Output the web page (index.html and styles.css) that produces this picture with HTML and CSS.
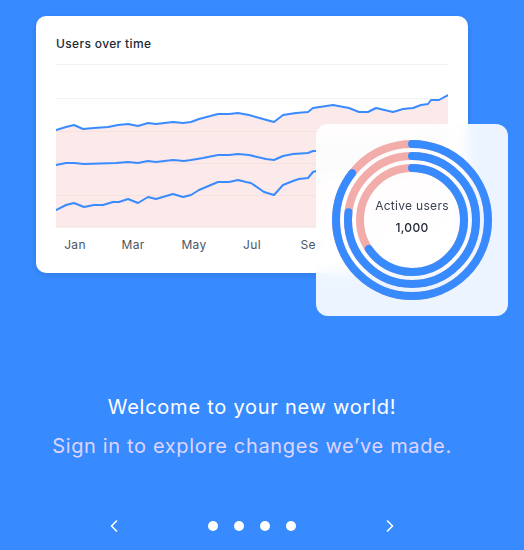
FILE: index.html
```html
<!DOCTYPE html>
<html lang="en">
<head>
<meta charset="utf-8">
<title>Welcome</title>
<link rel="stylesheet" href="styles.css">
</head>
<body>
<div class="page">
  <section class="hero">
    <div class="chart-card">
      <h2 class="card-title">Users over time</h2>
      <svg class="chart" width="392" height="200" viewBox="0 0 392 200">
        <path class="area" d="M0,70 L10,67 L18,65 L27,69 L38,68 L52,67 L62,65 L72,64 L82,66 L92,63 L100,64 L117,62 L127,63 L135,62 L143,59 L162,54 L173,54 L182,53 L193,55 L207,59 L218,62 L227,55 L240,53 L252,52 L257,48 L277,45 L293,48 L303,52 L312,52 L320,48 L337,52 L347,49 L357,48 L365,45 L372,44 L375,40 L383,40 L392,35 L392,167 L0,167 Z"/>
        <line class="grid" x1="0" y1="4.5" x2="392" y2="4.5"/>
        <line class="grid" x1="0" y1="38.5" x2="392" y2="38.5"/>
        <line class="grid pinkgrid" x1="0" y1="71.5" x2="392" y2="71.5"/>
        <line class="grid pinkgrid" x1="0" y1="103.5" x2="392" y2="103.5"/>
        <line class="grid pinkgrid" x1="0" y1="135.5" x2="392" y2="135.5"/>
        <line class="grid pinkgrid" x1="0" y1="167" x2="392" y2="167"/>
        <polyline class="line" points="0,70 10,67 18,65 27,69 38,68 52,67 62,65 72,64 82,66 92,63 100,64 117,62 127,63 135,62 143,59 162,54 173,54 182,53 193,55 207,59 218,62 227,55 240,53 252,52 257,48 277,45 293,48 303,52 312,52 320,48 337,52 347,49 357,48 365,45 372,44 375,40 383,40 392,35"/>
        <polyline class="line" points="0,105 10,103 18,103 28,104 60,103 72,102 82,103 92,101 100,102 117,100 128,101 135,100 147,98 162,95 173,95 182,94 193,95 210,99 218,100 227,96 237,94 252,93 257,91 260,91 277,85 293,88 303,92 312,92 320,88 337,92 347,89 357,88 365,85 372,84 375,80 383,80 392,75"/>
        <polyline class="line" points="0,150 10,145 18,143 28,147 38,145 47,145 57,142 63,142 72,139 82,143 92,137 100,139 117,134 127,137 135,135 143,130 162,122 173,122 182,120 190,122 195,123 208,132 218,135 227,125 237,121 243,119 252,118 257,112 260,111 277,104 293,107 303,110 320,105 340,108 360,102 375,96 392,90"/>
        <text class="tick" x="19" y="189">Jan</text>
        <text class="tick" x="77" y="189">Mar</text>
        <text class="tick" x="138" y="189">May</text>
        <text class="tick" x="196" y="189">Jul</text>
        <text class="tick" x="256" y="189">Sep</text>
        <text class="tick" x="316" y="189">Nov</text>
      </svg>
    </div>
    <div class="stat-card">
      <svg class="rings" width="192" height="192" viewBox="0 0 192 192">
        <g transform="rotate(-90 96 96)">
          <circle class="track" cx="96" cy="96" r="76"/>
          <circle class="track" cx="96" cy="96" r="64"/>
          <circle class="track" cx="96" cy="96" r="52"/>
          <circle class="bar" cx="96" cy="96" r="76" stroke-dasharray="408 478"/>
          <circle class="bar" cx="96" cy="96" r="64" stroke-dasharray="309 403"/>
          <circle class="bar" cx="96" cy="96" r="52" stroke-dasharray="214 327"/>
        </g>
      </svg>
      <div class="stat-text">
        <div class="stat-label">Active users</div>
        <div class="stat-value">1,000</div>
      </div>
    </div>
  </section>

  <section class="intro">
    <h1 class="intro-title">Welcome to your new world!</h1>
    <p class="intro-sub">Sign in to explore changes we’ve made.</p>
  </section>

  <nav class="pager">
    <svg class="chev" width="8" height="12" viewBox="0 0 8 12"><polyline points="6.5,1 1.5,6 6.5,11"/></svg>
    <div class="dots">
      <span class="dot"></span><span class="dot"></span><span class="dot"></span><span class="dot"></span>
    </div>
    <svg class="chev" width="8" height="12" viewBox="0 0 8 12"><polyline points="1.5,1 6.5,6 1.5,11"/></svg>
  </nav>
</div>
</body>
</html>
```

FILE: styles.css
```css
* { box-sizing: border-box; }
html, body { margin: 0; padding: 0; }
body {
  background: #388bff;
  font-family: Inter, "Open Sans", sans-serif;
}
.page {
  width: 524px;
  height: 550px;
  display: flex;
  flex-direction: column;
}
.hero {
  position: relative;
  height: 316px;
  padding: 16px 0 0 36px;
}
.chart-card {
  width: 432px;
  height: 257px;
  background: #fff;
  border-radius: 10px;
  padding: 20px 20px 13px;
  box-shadow: 0 2px 6px rgba(20, 50, 120, 0.18);
}
.card-title {
  margin: 0 0 8px;
  font-size: 12px;
  line-height: 16px;
  font-weight: 500;
  letter-spacing: 0.35px;
  color: #232a36;
}
.chart { display: block; overflow: hidden; }
.area { fill: #fbeae9; }
.grid { stroke: #f1f2f6; stroke-width: 1; }
.pinkgrid { stroke: #f5e1e0; }
.line {
  fill: none;
  stroke: #3a8bff;
  stroke-width: 2;
  stroke-linejoin: round;
  stroke-linecap: round;
}
.tick {
  font-size: 12px;
  fill: #4b5563;
  text-anchor: middle;
  letter-spacing: 0.3px;
}
.stat-card {
  position: absolute;
  left: 316px;
  top: 124px;
  width: 192px;
  height: 192px;
  border-radius: 12px;
  background: rgba(255, 255, 255, 0.9);
  -webkit-backdrop-filter: blur(8px);
  backdrop-filter: blur(8px);
}
.rings { position: absolute; left: 0; top: 0; }
.track { fill: none; stroke: #f2adab; stroke-width: 8; }
.bar { fill: none; stroke: #388bff; stroke-width: 8; stroke-linecap: round; }
.stat-text {
  position: absolute;
  inset: 0;
  display: flex;
  flex-direction: column;
  align-items: center;
  justify-content: center;
  gap: 7px;
  padding-bottom: 8px;
}
.stat-label {
  font-size: 12px;
  line-height: 15px;
  letter-spacing: 0.3px;
  color: #3a4150;
}
.stat-value {
  font-size: 12px;
  line-height: 15px;
  font-weight: 500;
  letter-spacing: 0.3px;
  color: #222936;
}
.intro {
  width: 504px;
  margin-top: 77px;
  text-align: center;
}
.intro-title {
  margin: 0;
  font-size: 20px;
  line-height: 28px;
  font-weight: 400;
  letter-spacing: 0.75px;
  color: #ffffff;
}
.intro-sub {
  margin: 11px 0 0;
  font-size: 20px;
  line-height: 28px;
  letter-spacing: 0.65px;
  color: #ddd5ff;
}
.pager {
  margin: auto 0 0 110px;
  width: 284px;
  padding-bottom: 18px;
  display: flex;
  align-items: center;
  justify-content: space-between;
}
.chev { display: block; }
.chev polyline {
  fill: none;
  stroke: #ffffff;
  stroke-width: 1.6;
  stroke-linecap: round;
  stroke-linejoin: round;
}
.dots { display: flex; gap: 16px; }
.dot {
  width: 10px;
  height: 10px;
  border-radius: 50%;
  background: #ffffff;
}
```
